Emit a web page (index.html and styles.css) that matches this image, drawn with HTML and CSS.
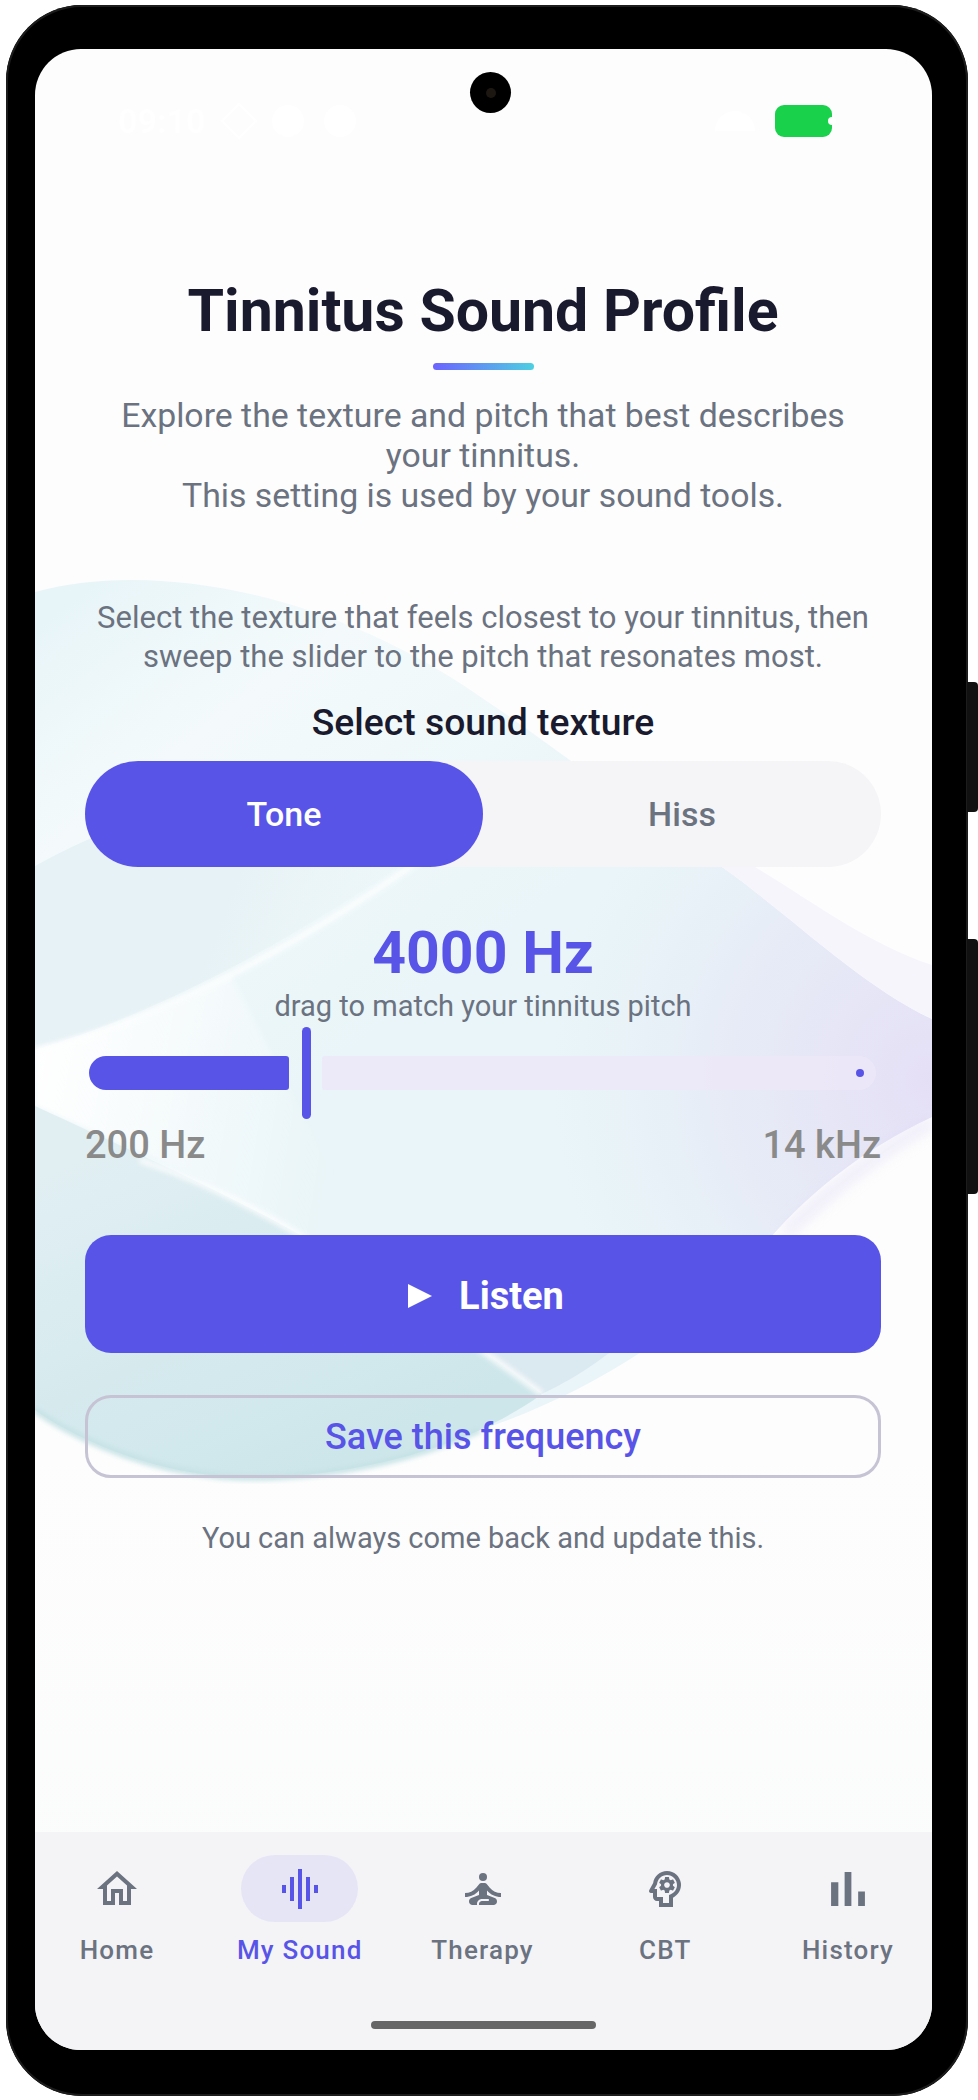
FILE: index.html
```html
<!DOCTYPE html>
<html lang="en">
<head>
    <meta charset="UTF-8">
    <title>Tinnitus Sound Profile</title>
    <link rel="stylesheet" href="styles.css">
</head>
<body>

<div class="phone">
    <span class="side-btn side-btn-power"></span>
    <span class="side-btn side-btn-volume"></span>

    <div class="screen">
        <!-- Soft wave artwork behind the content -->
        <svg class="waves" viewBox="35 49 897 2001" preserveAspectRatio="none" aria-hidden="true">
            <defs>
                <linearGradient id="waveBase" gradientUnits="userSpaceOnUse" x1="100" y1="580" x2="420" y2="1000">
                    <stop offset="0" stop-color="#e8f5f8"/>
                    <stop offset="0.35" stop-color="#f4fafb"/>
                    <stop offset="1" stop-color="#e9f5f8"/>
                </linearGradient>
                <radialGradient id="wavePurple" gradientUnits="userSpaceOnUse" cx="932" cy="1080" r="380">
                    <stop offset="0" stop-color="#e5dff6"/>
                    <stop offset="0.55" stop-color="#e6e8f6" stop-opacity="0.75"/>
                    <stop offset="1" stop-color="#e6eef7" stop-opacity="0"/>
                </radialGradient>
                <linearGradient id="waveLeft" gradientUnits="userSpaceOnUse" x1="35" y1="860" x2="400" y2="1000">
                    <stop offset="0" stop-color="#e6f2f6"/>
                    <stop offset="0.5" stop-color="#e7f2f6"/>
                    <stop offset="1" stop-color="#ecf7f9" stop-opacity="0"/>
                </linearGradient>
                <linearGradient id="waveWedge" gradientUnits="userSpaceOnUse" x1="35" y1="1080" x2="340" y2="1130">
                    <stop offset="0" stop-color="#fff" stop-opacity="0.95"/>
                    <stop offset="1" stop-color="#fff" stop-opacity="0"/>
                </linearGradient>
                <linearGradient id="waveTeal" gradientUnits="userSpaceOnUse" x1="140" y1="1130" x2="300" y2="1480">
                    <stop offset="0" stop-color="#e1eff3"/>
                    <stop offset="1" stop-color="#cde6ea"/>
                </linearGradient>
                <filter id="soft"><feGaussianBlur stdDeviation="2.5"/></filter>
                <filter id="softer" x="-30%" y="-30%" width="160%" height="160%"><feGaussianBlur stdDeviation="7"/></filter>
            </defs>
            <path fill="url(#waveBase)" d="M35 592C150 560 330 590 485 700C560 750 660 830 722 867C790 915 860 985 932 1019V1117C860 1150 800 1200 760 1250C700 1320 600 1390 480 1430C380 1475 260 1485 190 1472C130 1462 70 1435 35 1410Z"/>
            <path fill="url(#wavePurple)" d="M35 592C150 560 330 590 485 700C560 750 660 830 722 867C790 915 860 985 932 1019V1117C860 1150 800 1200 760 1250C700 1320 600 1390 480 1430C380 1475 260 1485 190 1472C130 1462 70 1435 35 1410Z"/>
            <path fill="#f6f5fb" d="M755 867C810 900 870 945 932 965V1019C860 985 790 915 722 867Z"/>
            <path fill="url(#waveLeft)" d="M35 866C100 830 180 800 260 790C300 800 380 850 400 868C330 910 200 1000 35 1050Z"/>
            <path fill="url(#waveWedge)" filter="url(#soft)" d="M35 1050C110 1030 170 1010 230 975L400 1300L200 1180L35 1106Z"/>
            <path fill="url(#waveTeal)" d="M35 1106C130 1150 230 1195 300 1235C380 1280 470 1340 542 1394C520 1410 500 1420 480 1430C380 1475 260 1485 190 1472C130 1462 70 1435 35 1410Z"/>
            <path fill="#dbe9f0" d="M609 1353C580 1375 560 1385 542 1394C510 1370 480 1350 450 1330C520 1350 570 1355 609 1353Z"/>
            <path fill="none" stroke="#c6e2e5" stroke-width="6" filter="url(#soft)" d="M35 1410C70 1435 130 1462 190 1472C260 1485 380 1475 480 1430"/>
            <path fill="none" stroke="#fff" stroke-width="6" opacity="0.8" filter="url(#soft)" d="M35 1050C150 1025 300 945 420 860"/>
            <path fill="none" stroke="#fff" stroke-width="6" opacity="0.8" filter="url(#soft)" d="M140 1160C200 1180 250 1205 300 1235C380 1280 470 1340 542 1394"/>
            <path fill="none" stroke="#dfd9f5" stroke-width="10" opacity="0.6" filter="url(#softer)" d="M932 1122C880 1150 830 1190 785 1233"/>
        </svg>

        <span class="camera"><span class="camera-lens"></span></span>

        <div class="status-bar">
            <div class="status-left">
                <span class="status-time">09:10</span>
                <span class="status-diamond"></span>
                <span class="status-dot"></span>
                <span class="status-dot"></span>
            </div>
            <div class="status-right">
                <span class="status-wifi"></span>
                <span class="battery"></span>
            </div>
        </div>

        <div class="content">
            <h1>Tinnitus Sound Profile</h1>
            <div class="title-rule"></div>
            <p class="intro">Explore the texture and pitch that best describes<br>your tinnitus.<br>This setting is used by your sound tools.</p>
            <p class="hint">Select the texture that feels closest to your tinnitus, then<br>sweep the slider to the pitch that resonates most.</p>
            <h2>Select sound texture</h2>

            <div class="toggle">
                <button class="toggle-btn toggle-active">Tone</button>
                <button class="toggle-btn">Hiss</button>
            </div>

            <div class="freq">4000 Hz</div>
            <div class="freq-note">drag to match your tinnitus pitch</div>

            <div class="slider">
                <span class="slider-fill"></span>
                <span class="slider-handle"></span>
                <span class="slider-track"><span class="slider-dot"></span></span>
            </div>
            <div class="slider-labels">
                <span>200 Hz</span>
                <span>14 kHz</span>
            </div>

            <button class="listen-btn"><span class="play"></span>Listen</button>
            <button class="save-btn">Save this frequency</button>
            <p class="note">You can always come back and update this.</p>
        </div>

        <nav class="tabbar">
            <div class="tab">
                <span class="tab-icon">
                    <svg viewBox="0 0 24 24"><path d="M12 5.69l5 4.5V18h-2v-6H9v6H7v-7.81l5-4.5M12 3L2 12h3v8h6v-6h2v6h6v-8h3L12 3z"/></svg>
                </span>
                <span class="tab-label">Home</span>
            </div>
            <div class="tab tab-active">
                <span class="tab-icon">
                    <svg viewBox="0 0 24 24"><path d="M7 18h2V6H7v12zm4 4h2V2h-2v20zm-8-8h2v-4H3v4zm12 4h2V6h-2v12zm4-8v4h2v-4h-2z"/></svg>
                </span>
                <span class="tab-label">My Sound</span>
            </div>
            <div class="tab">
                <span class="tab-icon">
                    <svg viewBox="0 0 24 24"><circle cx="12" cy="6" r="2"/><path d="M21 16v-2c-2.24 0-4.16-.96-5.6-2.68l-1.34-1.6C13.68 9.26 13.12 9 12.53 9h-1.05c-.59 0-1.15.26-1.53.72l-1.34 1.6C7.16 13.04 5.24 14 3 14v2c2.77 0 5.19-1.17 7-3.25V15l-3.88 1.55C5.45 16.82 5 17.48 5 18.21 5 19.2 5.8 20 6.79 20H9v-.5c0-1.38 1.12-2.5 2.5-2.5h3c.28 0 .5.22.5.5s-.22.5-.5.5h-3c-.83 0-1.5.67-1.5 1.5v.5h7.21c.99 0 1.79-.8 1.79-1.79 0-.73-.45-1.39-1.12-1.66L14 15v-2.25c1.81 2.08 4.23 3.25 7 3.25z"/></svg>
                </span>
                <span class="tab-label">Therapy</span>
            </div>
            <div class="tab">
                <span class="tab-icon">
                    <svg viewBox="0 0 24 24"><path d="M15.82 7.22l-1 .4c-.21-.16-.43-.29-.67-.39L14 6.17c-.02-.1-.1-.17-.2-.17h-1.6c-.1 0-.18.07-.19.17l-.15 1.06c-.24.1-.47.23-.67.39l-1-.4c-.09-.03-.2 0-.24.09l-.8 1.38c-.05.09-.03.2.05.26l.85.66c-.03.12-.05.26-.05.39 0 .13.01.26.03.39l-.84.66c-.08.06-.1.17-.05.25l.8 1.39c.05.09.15.12.25.09l.99-.4c.21.16.43.29.68.39l.14 1.06c.02.1.1.17.2.17h1.6c.1 0 .18-.07.2-.17l.15-1.06c.24-.1.46-.23.67-.39l.99.4c.09.04.2 0 .24-.09l.8-1.39c.05-.09.03-.19-.05-.25l-.83-.66c.02-.13.03-.26.03-.39 0-.14-.01-.27-.03-.39l.85-.66c.08-.06.1-.17.05-.26l-.8-1.38c-.05-.09-.16-.12-.25-.09zM13 11.43c-.79 0-1.43-.64-1.43-1.43s.64-1.43 1.43-1.43 1.43.64 1.43 1.43-.64 1.43-1.43 1.43z"/><path d="M19.94 9.06C19.5 5.73 16.57 3 13 3 9.47 3 6.57 5.61 6.08 9l-1.93 3.48C3.74 13.14 4.22 14 5 14h1v2c0 1.1.9 2 2 2h1v3h7v-4.68c2.62-1.25 4.35-4.08 3.94-7.26zm-5.05 5.57l-.89.42V19h-3v-3H8v-4H6.7l1.33-2.33C8.21 7.06 10.35 5 13 5c2.76 0 5 2.24 5 5 0 2.09-1.29 3.88-3.11 4.63z"/></svg>
                </span>
                <span class="tab-label">CBT</span>
            </div>
            <div class="tab">
                <span class="tab-icon">
                    <svg class="icon-bars" viewBox="0 0 24 24"><path d="M5 9.2h3V19H5zM10.6 5h2.8v14h-2.8zm5.6 8H19v6h-2.8z"/></svg>
                </span>
                <span class="tab-label">History</span>
            </div>
            <span class="home-bar"></span>
        </nav>
    </div>
</div>

</body>
</html>
```

FILE: styles.css
```css
body {
    margin: 0;
    background-color: #fff;
    font-family: Roboto, "Liberation Sans", sans-serif;
}
.phone {
    position: relative;
    box-sizing: border-box;
    width: 962px;
    height: 2091px;
    margin: 5px 0 0 6px;
    padding: 44px 36px 46px 29px;
    background-color: #000;
    border-radius: 76px;
    box-shadow: inset 0 0 0 2px #1c1c1c;
}
.side-btn {
    position: absolute;
    right: -10px;
    width: 11px;
    background-color: #111;
    border-radius: 0 4px 4px 0;
}
.side-btn-power {
    top: 677px;
    height: 130px;
}
.side-btn-volume {
    top: 934px;
    height: 255px;
}
.screen {
    position: relative;
    display: flex;
    flex-direction: column;
    height: 100%;
    overflow: hidden;
    background: linear-gradient(#fdfdfd 70%, #fafbfb);
    border-radius: 46px;
}
.waves {
    position: absolute;
    left: 0;
    top: 0;
    width: 100%;
    height: 100%;
}
.camera {
    position: absolute;
    left: 435px;
    top: 23px;
    display: flex;
    align-items: center;
    justify-content: center;
    width: 41px;
    height: 41px;
    background-color: #000;
    border-radius: 50%;
}
.camera-lens {
    width: 10px;
    height: 10px;
    background-color: #1d1712;
    border-radius: 50%;
}

/* status bar is white on white in the capture */
.status-bar {
    position: relative;
    display: flex;
    justify-content: space-between;
    height: 32px;
    margin-top: 56px;
    padding: 0 100px 0 83px;
}
.status-left, .status-right {
    display: flex;
    align-items: center;
    gap: 20px;
}
.status-time {
    color: #fff;
    font-size: 34px;
    font-weight: 700;
    line-height: 32px;
}
.status-diamond {
    width: 22px;
    height: 22px;
    border: 2px solid #fff;
    transform: rotate(45deg);
}
.status-dot {
    width: 32px;
    height: 32px;
    background-color: #fff;
    border-radius: 50%;
}
.status-wifi {
    width: 40px;
    height: 20px;
    background-color: #fff;
    border-radius: 20px 20px 0 0;
}
.battery {
    position: relative;
    width: 57px;
    height: 32px;
    background-color: #1ad14c;
    border-radius: 9px;
}
.battery::after {
    content: "";
    position: absolute;
    right: -4px;
    top: 12px;
    width: 8px;
    height: 8px;
    background-color: #fff;
    border-radius: 50%;
}

.content {
    position: relative;
    display: flex;
    flex-direction: column;
    padding: 0 51px 0 50px;
    text-align: center;
}
h1 {
    margin: 140px 0 0;
    color: #1a1a2e;
    font-size: 59px;
    font-weight: 700;
    line-height: 68px;
}
.title-rule {
    align-self: center;
    width: 101px;
    height: 7px;
    margin-top: 18px;
    background: linear-gradient(90deg, #6c63ff, #4dd0e1);
    border-radius: 4px;
}
.intro {
    margin: 26px 0 0;
    color: #6b7280;
    font-size: 33.8px;
    line-height: 40px;
}
.hint {
    margin: 83px 0 0;
    color: #6b7280;
    font-size: 31px;
    line-height: 38.5px;
}
h2 {
    margin: 24px 0 0;
    color: #1a1a2e;
    font-size: 37.3px;
    font-weight: 500;
    line-height: 44px;
}
.toggle {
    display: flex;
    height: 106px;
    margin-top: 17px;
    background-color: #f5f5f8;
    border-radius: 53px;
}
.toggle-btn {
    flex: 1;
    padding: 0;
    border: none;
    border-radius: 53px;
    background: none;
    color: #6b7280;
    font-family: inherit;
    font-size: 34px;
    font-weight: 500;
}
.toggle-active {
    background-color: #5954e8;
    color: #fff;
}
.freq {
    margin-top: 51px;
    color: #5954e8;
    font-size: 59px;
    font-weight: 700;
    line-height: 70px;
}
.freq-note {
    color: #6b7280;
    font-size: 29px;
    line-height: 36px;
}
.slider {
    display: flex;
    align-items: center;
    height: 92px;
    margin-top: 3px;
    padding: 0 5px 0 4px;
}
.slider-fill {
    width: 200px;
    height: 34px;
    background-color: #5954e8;
    border-radius: 17px 3px 3px 17px;
}
.slider-handle {
    width: 9px;
    height: 92px;
    margin: 0 11px 0 13px;
    background-color: #5954e8;
    border-radius: 5px;
}
.slider-track {
    display: flex;
    flex: 1;
    align-items: center;
    justify-content: flex-end;
    height: 34px;
    padding-right: 12px;
    background-color: rgba(236, 232, 248, 0.85);
    border-radius: 3px 17px 17px 3px;
}
.slider-dot {
    width: 8px;
    height: 8px;
    background-color: #5954e8;
    border-radius: 50%;
}
.slider-labels {
    display: flex;
    justify-content: space-between;
    margin-top: 4px;
    color: #8a8a8a;
    font-size: 38px;
    font-weight: 500;
    line-height: 44px;
}
.listen-btn {
    display: flex;
    align-items: center;
    justify-content: center;
    gap: 27px;
    box-sizing: border-box;
    height: 118px;
    margin-top: 68px;
    padding: 3px 0 0 6px;
    border: none;
    border-radius: 26px;
    background-color: #5954e8;
    color: #fff;
    font-family: inherit;
    font-size: 38px;
    font-weight: 700;
}
.play {
    width: 0;
    height: 0;
    border-top: 12px solid transparent;
    border-bottom: 12px solid transparent;
    border-left: 24px solid #fff;
}
.save-btn {
    height: 83px;
    margin-top: 42px;
    border: 3px solid #c6c4d4;
    border-radius: 26px;
    background: none;
    color: #5954e8;
    font-family: inherit;
    font-size: 36px;
    font-weight: 500;
}
.note {
    margin: 42px 0 0;
    color: #6b7280;
    font-size: 29px;
    line-height: 36px;
}

.tabbar {
    position: relative;
    display: flex;
    justify-content: space-between;
    box-sizing: border-box;
    height: 218px;
    margin-top: auto;
    padding: 23px 4px 0 2px;
    background-color: #f4f4f7;
}
.tab {
    display: flex;
    flex-direction: column;
    align-items: center;
    width: 160px;
    color: #6b7280;
}
.tab-icon {
    display: flex;
    align-items: center;
    justify-content: center;
    width: 117px;
    height: 67px;
    border-radius: 34px;
}
.tab-icon svg {
    width: 48px;
    height: 48px;
    fill: currentColor;
}
.tab-icon .icon-bars {
    width: 58px;
    height: 58px;
}
.tab-label {
    margin-top: 10px;
    font-size: 26px;
    font-weight: 500;
    letter-spacing: 1.2px;
    line-height: 36px;
}
.tab-active {
    color: #5954e8;
}
.tab-active .tab-icon {
    background-color: #e6e5f6;
}
.home-bar {
    position: absolute;
    left: 336px;
    bottom: 21px;
    width: 225px;
    height: 8px;
    background-color: #666;
    border-radius: 4px;
}
```
